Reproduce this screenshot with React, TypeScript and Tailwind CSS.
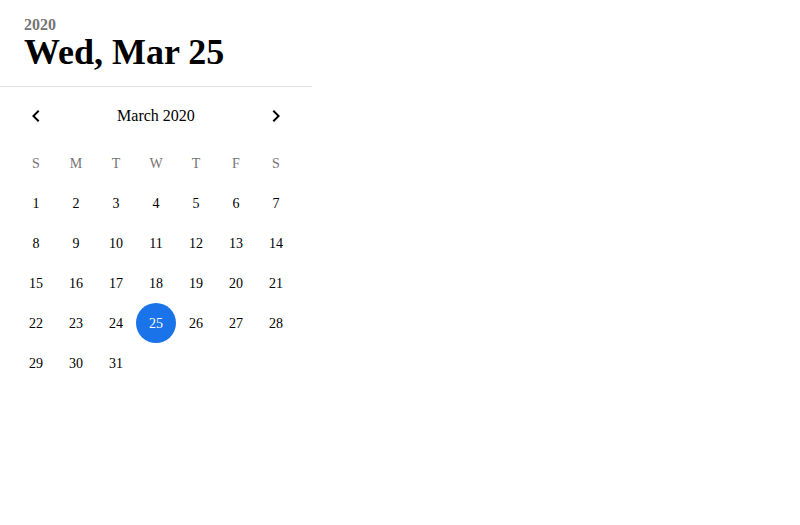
import * as React from 'react'

const weekdays = ['S', 'M', 'T', 'W', 'T', 'F', 'S']

function Chevron({ dir }: { dir: 'left' | 'right' }) {
  return (
    <svg viewBox="0 0 24 24" className="h-6 w-6" fill="currentColor">
      {dir === 'left' ? (
        <path d="M15.41 7.41L14 6l-6 6 6 6 1.41-1.41L10.83 12z" />
      ) : (
        <path d="M10 6L8.59 7.41 13.17 12l-4.58 4.59L10 18l6-6z" />
      )}
    </svg>
  )
}

export default function App() {
  // March 2020 starts on a Sunday
  const days: (number | null)[] = []
  for (let d = 1; d <= 31; d++) days.push(d)
  const selected = 25

  return (
    <div className="w-[800px] h-[525px] bg-white text-black font-['Liberation_Serif',serif]">
      <div className="w-[312px]">
        <div className="h-[86px] px-6 pt-[16px] flex flex-col">
          <div className="text-[16px] leading-[17px] font-bold text-[#757575]">2020</div>
          <div className="text-[36px] leading-[38px] font-bold">Wed, Mar 25</div>
        </div>
        <div className="h-px bg-[#e0e0e0]" />

        <div className="px-4 mt-[9px]">
          <div className="flex items-center justify-between h-10">
            <button className="w-10 h-10 flex items-center justify-center text-black">
              <Chevron dir="left" />
            </button>
            <div className="text-[16px]">March 2020</div>
            <button className="w-10 h-10 flex items-center justify-center text-black">
              <Chevron dir="right" />
            </button>
          </div>

          <div className="grid grid-cols-7 mt-[7px]">
            {weekdays.map((w, i) => (
              <div key={i} className="h-10 flex items-center justify-center text-[14px] text-[#757575]">
                {w}
              </div>
            ))}
            {days.map((d, i) => (
              <div key={i} className="h-10 flex items-center justify-center text-[14px]">
                {d === selected ? (
                  <span className="w-10 h-10 rounded-full bg-[#1a73e8] text-white flex items-center justify-center">
                    {d}
                  </span>
                ) : (
                  d
                )}
              </div>
            ))}
          </div>
        </div>
      </div>
    </div>
  )
}
